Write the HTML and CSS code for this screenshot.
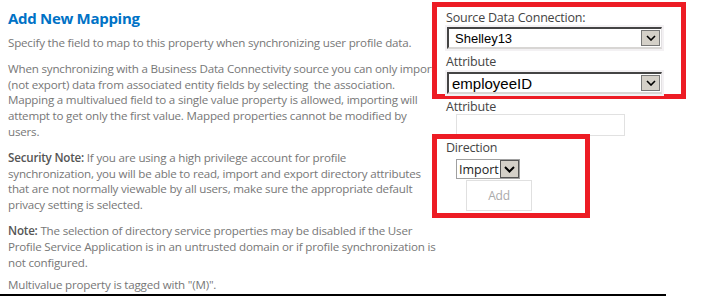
FILE: index.html
```html
<!DOCTYPE html>
<html lang="en">
<head>
  <meta charset="UTF-8" />
  <title>Add New Mapping</title>
  <link rel="stylesheet" href="styles.css">
</head>
<body>
  <div class="page">
    <div class="info">
      <h2>Add New Mapping</h2>
      <p>Specify the field to map to this property when synchronizing user profile data.</p>
      <p>When synchronizing with a Business Data Connectivity source you can only import<br>
        (not export) data from associated entity fields by selecting&nbsp; the association.<br>
        Mapping a multivalued field to a single value property is allowed, importing will<br>
        attempt to get only the first value. Mapped properties cannot be modified by<br>
        users.</p>
      <p><b>Security Note:</b> If you are using a high privilege account for profile<br>
        synchronization, you will be able to read, import and export directory attributes<br>
        that are not normally viewable by all users, make sure the appropriate default<br>
        privacy setting is selected.</p>
      <p><b>Note:</b> The selection of directory service properties may be disabled if the User<br>
        Profile Service Application is in an untrusted domain or if profile synchronization is<br>
        not configured.</p>
      <p class="last">Multivalue property is tagged with "(M)".</p>
    </div>

    <div class="panel">
      <div class="marked source">
        <label>Source Data Connection:</label>
        <div class="dropdown">
          <span class="value">Shelley13</span>
          <span class="arrow"><svg width="10" height="6" viewBox="0 0 10 6"><path d="M1 1l4 4 4-4" fill="none" stroke="#000" stroke-width="1.6"/></svg></span>
        </div>
        <label>Attribute</label>
        <div class="dropdown big">
          <span class="value">employeeID</span>
          <span class="arrow"><svg width="10" height="6" viewBox="0 0 10 6"><path d="M1 1l4 4 4-4" fill="none" stroke="#000" stroke-width="1.6"/></svg></span>
        </div>
      </div>

      <label class="plain">Attribute</label>
      <div class="textbox"></div>

      <div class="marked direction">
        <label>Direction</label>
        <div class="combo">
          <span class="value">Import</span>
          <span class="arrow"><svg width="11" height="7" viewBox="0 0 11 7"><path d="M1 1l4.5 4.5 4.5-4.5" fill="none" stroke="#000" stroke-width="2"/></svg></span>
        </div>
        <div class="add">Add</div>
      </div>
    </div>
  </div>
  <div class="rule"></div>
</body>
</html>
```

FILE: styles.css
```css
body {
  margin: 0;
  background: #fff;
  font-family: "Open Sans", "Noto Sans", sans-serif;
  color: #777;
}

.page {
  display: flex;
  align-items: flex-start;
  padding: 0 0 0 8px;
  height: 294px;
  overflow: hidden;
}

.info {
  width: 436px;
  flex-shrink: 0;
  font-size: 11.6px;
  line-height: 15.8px;
  letter-spacing: -0.2px;
  white-space: nowrap;
}

.info h2 {
  margin: 8px 0 7px;
  font-size: 15px;
  line-height: 20px;
  font-weight: 700;
  letter-spacing: -0.3px;
  color: #0072c6;
}

.info p {
  margin: 0 0 10px;
}

.info b {
  font-weight: 600;
  color: #555;
}

.info p.last {
  margin-top: -3px;
}

.panel {
  position: relative;
  z-index: 1;
  margin-left: -12px;
  margin-top: 2px;
  width: 254px;
  background: #fff;
  color: #444;
  font-size: 12.5px;
  letter-spacing: -0.2px;
}

.marked {
  border: 5px solid #ed1c24;
  padding: 2px 0 0 9px;
}

.source {
  height: 85px;
}

.panel label {
  display: block;
  line-height: 17px;
}

.dropdown {
  display: flex;
  align-items: center;
  justify-content: space-between;
  width: 212px;
  height: 18px;
  margin: 1px 0 4px 1px;
  border-top: 2px solid #444;
  border-left: 2px solid #444;
  border-right: 1px solid #e2e0e2;
  border-bottom: 2px solid #d8d6d4;
  box-shadow: 0 0 0 2px #f3f1f3;
  background: #fff;
  font-family: "Liberation Sans", Arial, sans-serif;
  font-size: 13px;
  letter-spacing: 0;
  color: #000;
}

.dropdown .value {
  padding-left: 6px;
}

.dropdown.big {
  margin-top: 2px;
  margin-bottom: 0;
  font-size: 15px;
}

.dropdown.big .value {
  padding-left: 3px;
}

.arrow {
  display: flex;
  align-items: center;
  justify-content: center;
  width: 17px;
  height: 14px;
  background: #d4d0c8;
  border: 1px solid #777;
  margin-right: 1px;
}

.plain {
  margin: -1px 0 0 14px;
}

.textbox {
  width: 167px;
  height: 20px;
  margin: -1px 0 0 24px;
  border: 1px solid #e1e1e1;
}

.direction {
  width: 139px;
  margin-top: -2px;
  padding-top: 0;
  padding-bottom: 2px;
}

.combo {
  display: flex;
  align-items: center;
  width: max-content;
  margin: 3px 0 0 10px;
  height: 18px;
  border: 1px solid #a0a0a0;
  font-size: 12.5px;
  letter-spacing: 0;
  color: #222;
}

.combo .value {
  padding: 0 1px 0 2px;
}

.combo .arrow {
  height: 16px;
  width: 17px;
  margin: 0;
  border: 1px solid #555;
  background: #d4d0c8;
}

.add {
  width: 64px;
  height: 29px;
  margin: 1px 0 0 20px;
  border: 1px solid #e0e0e0;
  text-align: center;
  line-height: 29px;
  font-size: 12px;
  color: #aaa;
}

.rule {
  width: 666px;
  height: 2px;
  background: #000;
}
```
